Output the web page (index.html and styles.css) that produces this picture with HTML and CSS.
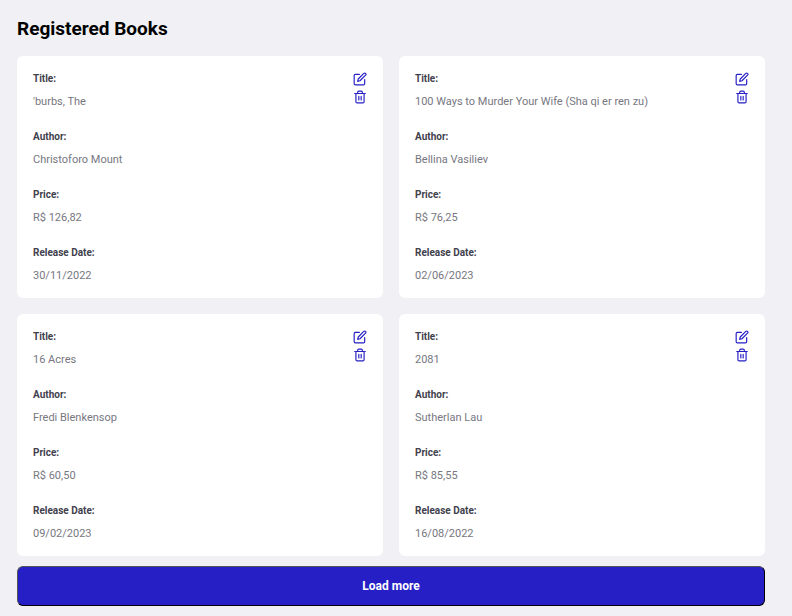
FILE: index.html
```html
<!DOCTYPE html>
<html lang="en">
<head>
<meta charset="utf-8">
<meta name="viewport" content="width=device-width, initial-scale=1">
<title>Registered Books</title>
<link rel="stylesheet" href="styles.css">
</head>
<body>
<svg class="sprite" aria-hidden="true">
  <symbol id="edit" viewBox="0 0 24 24"><path d="M11 4H4a2 2 0 0 0-2 2v14a2 2 0 0 0 2 2h14a2 2 0 0 0 2-2v-7"/><path d="M18.500 2.500a2.121 2.121 0 0 1 3 3L12 15l-4 1 1-4 9.500-9.500z"/></symbol>
  <symbol id="trash" viewBox="0 0 24 24"><path d="M3 6h18M19 6v14a2 2 0 0 1-2 2H7a2 2 0 0 1-2-2V6m3 0V4a2 2 0 0 1 2-2h4a2 2 0 0 1 2 2v2M10 11v6M14 11v6"/></symbol>
</svg>
<main class="page">
  <h1>Registered Books</h1>
  <section class="books">
    <article class="card">
      <dl><div><dt>Title:</dt><dd>'burbs, The</dd></div><div><dt>Author:</dt><dd>Christoforo Mount</dd></div><div><dt>Price:</dt><dd>R$ 126,82</dd></div><div><dt>Release Date:</dt><dd>30/11/2022</dd></div></dl>
      <div class="actions"><button type="button" aria-label="Edit"><svg><use href="#edit"/></svg></button><button type="button" aria-label="Delete"><svg><use href="#trash"/></svg></button></div>
    </article>
    <article class="card">
      <dl><div><dt>Title:</dt><dd>100 Ways to Murder Your Wife (Sha qi er ren zu)</dd></div><div><dt>Author:</dt><dd>Bellina Vasiliev</dd></div><div><dt>Price:</dt><dd>R$ 76,25</dd></div><div><dt>Release Date:</dt><dd>02/06/2023</dd></div></dl>
      <div class="actions"><button type="button" aria-label="Edit"><svg><use href="#edit"/></svg></button><button type="button" aria-label="Delete"><svg><use href="#trash"/></svg></button></div>
    </article>
    <article class="card">
      <dl><div><dt>Title:</dt><dd>16 Acres</dd></div><div><dt>Author:</dt><dd>Fredi Blenkensop</dd></div><div><dt>Price:</dt><dd>R$ 60,50</dd></div><div><dt>Release Date:</dt><dd>09/02/2023</dd></div></dl>
      <div class="actions"><button type="button" aria-label="Edit"><svg><use href="#edit"/></svg></button><button type="button" aria-label="Delete"><svg><use href="#trash"/></svg></button></div>
    </article>
    <article class="card">
      <dl><div><dt>Title:</dt><dd>2081</dd></div><div><dt>Author:</dt><dd>Sutherlan Lau</dd></div><div><dt>Price:</dt><dd>R$ 85,55</dd></div><div><dt>Release Date:</dt><dd>16/08/2022</dd></div></dl>
      <div class="actions"><button type="button" aria-label="Edit"><svg><use href="#edit"/></svg></button><button type="button" aria-label="Delete"><svg><use href="#trash"/></svg></button></div>
    </article>
  </section>
  <button type="button" class="load-more">Load more</button>
</main>
</body>
</html>
```
FILE: styles.css
```css
* { box-sizing: border-box; margin: 0; padding: 0; }
body { background: #f0f0f5; font-family: Roboto, sans-serif; color: #000; }
.sprite { display: none; }
.page { padding: 16px 27px 10px 17px; }
h1 { font-size: 19px; line-height: 26px; font-weight: 700; margin-bottom: 14px; }
.books { display: grid; grid-template-columns: 1fr 1fr; gap: 16px; }
.card { display: flex; justify-content: space-between; background: #fff; border-radius: 6px; padding: 15px 16px 14px; }
dl { display: grid; gap: 19px; }
dt { font-size: 10px; line-height: 16px; font-weight: 700; color: #41414d; margin-bottom: 7px; }
dd { font-size: 11px; line-height: 16px; color: #77777f; }
.actions { display: flex; flex-direction: column; gap: 4px; padding-top: 1px; }
.actions button { display: block; background: none; border: 0; cursor: pointer; }
.actions svg { display: block; width: 14px; height: 14px; fill: none; stroke: #251fc5; stroke-width: 2; stroke-linecap: round; stroke-linejoin: round; }
.load-more { display: block; width: 100%; height: 40px; margin-top: 10px; background: #251fc5; color: #fff; border: 1px outset #000; border-radius: 6px; font: 700 12px Roboto, sans-serif; cursor: pointer; }
```
